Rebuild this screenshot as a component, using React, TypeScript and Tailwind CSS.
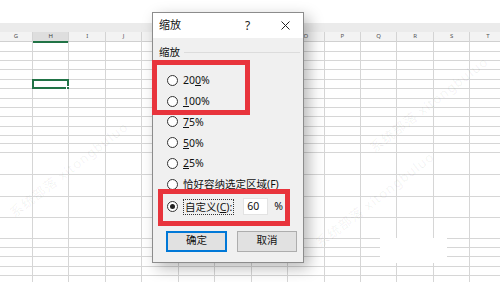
import React from "react";

const COLS = ["G", "H", "I", "J", "K", "L", "M", "N", "O", "P", "Q", "R", "S", "T"];
const ROW_COUNT = 21;

const FONT = { fontFamily: '"Noto Sans", "Noto Sans CJK SC", sans-serif' };

function Radio({ checked = false }: { checked?: boolean }) {
  return (
    <span className="w-[11px] h-[11px] rounded-full border border-[#333] bg-white flex items-center justify-center shrink-0">
      {checked && <span className="w-[5px] h-[5px] rounded-full bg-[#222]" />}
    </span>
  );
}

function Option({ children, checked }: { children: React.ReactNode; checked?: boolean }) {
  return (
    <div className="h-[20.8px] flex items-center gap-[5px] pl-[14px]">
      <Radio checked={checked} />
      <span className="text-[10.5px] text-[#111] leading-none">{children}</span>
    </div>
  );
}

// faint site watermark, kept clear of the header and dialog
const WATERMARKS = ["left-[12px] top-[205px]", "left-[318px] top-[235px]", "left-[372px] top-[140px]"];

export default function App() {
  return (
    <div className="relative w-[500px] h-[282px] overflow-hidden bg-white" style={FONT}>
      {/* sheet */}
      <div className="flex flex-col">
        <div className="h-[23px] bg-white" />
        <div className="h-[9px] bg-[#ebebeb]" />
        <div className="grid grid-cols-[33px_repeat(13,36.45px)] h-[10px] bg-[#f3f3f3] border-b border-[#d0d0d0] w-max">
          {COLS.map((c) => (
            <div
              key={c}
              className={
                c === "H"
                  ? "border-r border-[#d4d4d4] bg-[#dedede] border-b-2 border-b-[#217346] text-[6px] leading-[9px] text-[#444] text-center"
                  : "border-r border-[#d4d4d4] text-[6px] leading-[9px] text-[#555] text-center"
              }
            >
              {c}
            </div>
          ))}
        </div>
        <div className="grid grid-cols-[33px_repeat(13,36.45px)] grid-rows-[10px_9px_9px_10px_9px_10px_9px_9px_10px_9px_8px_9px_22px_22px_21px_21px_9px_9px_10px_9px_9px] w-max">
          {Array.from({ length: ROW_COUNT }).map((_, r) =>
            COLS.map((c, ci) => (
              <div key={r + c} className="relative border-r border-b border-[#d6d6d6]">
                {r === 4 && ci === 1 && (
                  <div className="absolute -left-px -top-px -right-px -bottom-px border-2 border-[#217346]">
                    <span className="absolute -right-[3px] -bottom-[3px] w-[4px] h-[4px] bg-[#217346] border border-white" />
                  </div>
                )}
              </div>
            ))
          )}
        </div>
      </div>

      {WATERMARKS.map((pos, i) => (
        <span
          key={i}
          className={`absolute ${pos} text-[13px] text-black/[0.06] whitespace-nowrap -rotate-[38deg] origin-left tracking-[1px] pointer-events-none`}
        >
          系统部落 xitongbuluo
        </span>
      ))}

      {/* white patch */}
      <div className="absolute left-[380px] top-[238px] w-[67px] h-[25px] bg-white" />

      {/* dialog */}
      <div className="absolute left-[152px] top-[12px] w-[152px] h-[251px] border border-[#8c8c8c] bg-[#f0f0f0] shadow-[5px_5px_14px_rgba(0,0,0,0.28)] flex flex-col">
        <div className="h-[25px] bg-white flex items-center pl-[6px] pr-[10px] shrink-0">
          <span className="text-[11px] text-[#111]">缩放</span>
          <span className="ml-[64px] text-[12px] text-[#222]">?</span>
          <svg className="ml-auto mr-[3px]" width="9" height="9" viewBox="0 0 9 9">
            <path d="M0.5 0.5l8 8M8.5 0.5l-8 8" stroke="#222" strokeWidth="1" />
          </svg>
        </div>
        <div className="flex flex-col">
          <div className="h-[14px] mt-[7px] flex items-center pl-[6px] gap-[4px]">
            <span className="text-[10.5px] text-[#111] leading-none">缩放</span>
            <span className="flex-1 h-px bg-[#dcdcdc] mr-[3px]" />
          </div>
          <div className="mt-[11px] flex flex-col">
            <Option>
              20<span className="underline">0</span>%
            </Option>
            <Option>
              <span className="underline">1</span>00%
            </Option>
            <Option>
              <span className="underline">7</span>5%
            </Option>
            <Option>
              <span className="underline">5</span>0%
            </Option>
            <Option>
              <span className="underline">2</span>5%
            </Option>
            <Option>
              恰好容纳选定区域(<span className="underline">F</span>)
            </Option>
          </div>
          <div className="h-[18px] mt-[3px] flex items-center gap-[5px] pl-[14px]">
            <Radio checked />
            <span className="text-[10.5px] text-[#111] leading-none border border-dotted border-[#333] px-px py-[2px]">
              自定义(<span className="underline">C</span>):
            </span>
            <span className="ml-[4px] w-[25px] h-[17px] bg-white border border-[#e3e3e3] flex items-center pl-[3px] text-[10.5px] text-[#111]">
              60
            </span>
            <span className="ml-[1px] text-[10.5px] text-[#111]">%</span>
          </div>
          <div className="mt-[15px] flex gap-[10px] pl-[13px]">
            <button className="w-[61px] h-[21px] bg-[#e1e1e1] border-2 border-[#0078d7] text-[10.5px] text-[#111] flex items-center justify-center">
              确定
            </button>
            <button className="w-[60px] h-[21px] bg-[#e1e1e1] border border-[#adadad] text-[10.5px] text-[#111] flex items-center justify-center">
              取消
            </button>
          </div>
        </div>
      </div>

      {/* red annotations */}
      <div className="absolute left-[152px] top-[60px] w-[98px] h-[55px] border-[5px] border-[#e8343c]" />
      <div className="absolute left-[158px] top-[189px] w-[132px] h-[37px] border-[5px] border-[#e8343c]" />
    </div>
  );
}
